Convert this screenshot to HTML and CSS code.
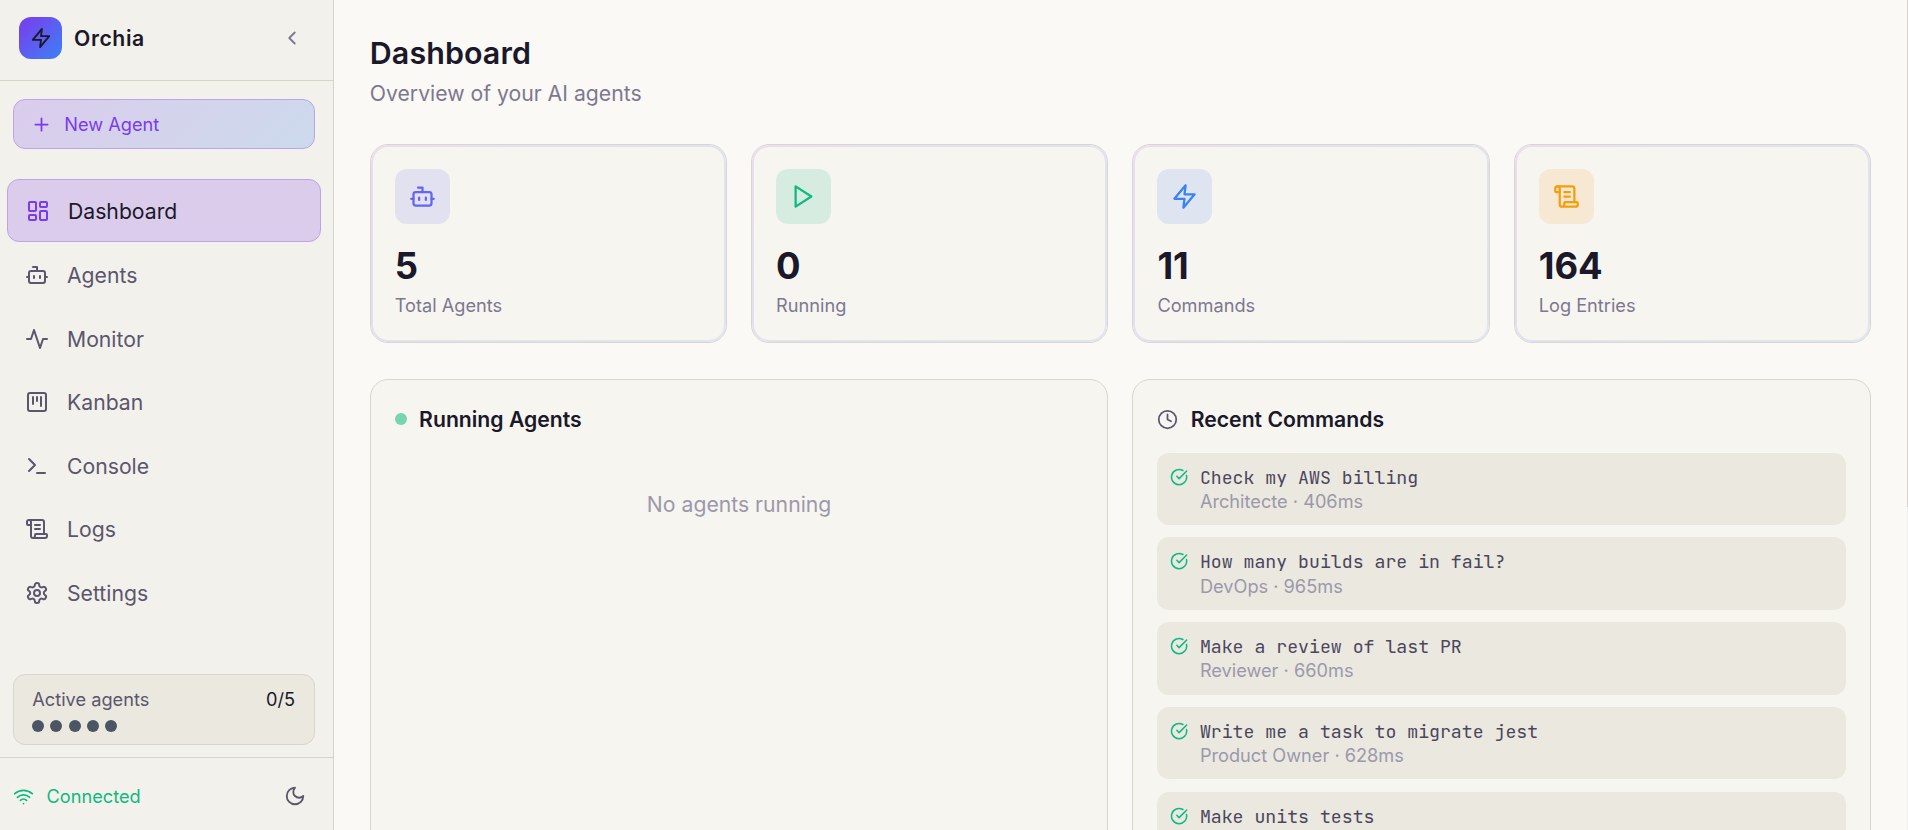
FILE: index.html
```html
<!DOCTYPE html>
<html lang="en">
<head>
<meta charset="utf-8">
<title>Orchia</title>
<link rel="stylesheet" href="styles.css">
</head>
<body>
<svg class="sprite" aria-hidden="true">
  <symbol id="zap" viewBox="0 0 24 24"><polygon points="13 2 3 14 12 14 11 22 21 10 12 10 13 2"/></symbol>
  <symbol id="chevron" viewBox="0 0 24 24"><path d="m15 18-6-6 6-6"/></symbol>
  <symbol id="plus" viewBox="0 0 24 24"><path d="M5 12h14M12 5v14"/></symbol>
  <symbol id="grid" viewBox="0 0 24 24"><rect x="3" y="3" width="7" height="9" rx="1"/><rect x="14" y="3" width="7" height="5" rx="1"/><rect x="14" y="12" width="7" height="9" rx="1"/><rect x="3" y="16" width="7" height="5" rx="1"/></symbol>
  <symbol id="bot" viewBox="0 0 24 24"><path d="M12 8V4H8"/><rect x="4" y="8" width="16" height="12" rx="2"/><path d="M2 14h2M20 14h2M15 13v2M9 13v2"/></symbol>
  <symbol id="activity" viewBox="0 0 24 24"><polyline points="22 12 18 12 15 21 9 3 6 12 2 12"/></symbol>
  <symbol id="kanban" viewBox="0 0 24 24"><rect x="3" y="3" width="18" height="18" rx="2"/><path d="M8 7v7M12 7v4M16 7v9"/></symbol>
  <symbol id="terminal" viewBox="0 0 24 24"><path d="m4 17 6-6-6-6M12 19h8"/></symbol>
  <symbol id="scroll" viewBox="0 0 24 24"><path d="M15 12h-5M15 8h-5M19 17V5a2 2 0 0 0-2-2H4"/><path d="M8 21h12a2 2 0 0 0 2-2v-1a1 1 0 0 0-1-1H11a1 1 0 0 0-1 1v1a2 2 0 1 1-4 0V5a2 2 0 1 0-4 0v2a1 1 0 0 0 1 1h3"/></symbol>
  <symbol id="gear" viewBox="0 0 24 24"><path d="M12.22 2h-.44a2 2 0 0 0-2 2v.18a2 2 0 0 1-1 1.73l-.43.25a2 2 0 0 1-2 0l-.15-.08a2 2 0 0 0-2.73.73l-.22.38a2 2 0 0 0 .73 2.73l.15.1a2 2 0 0 1 1 1.72v.51a2 2 0 0 1-1 1.74l-.15.09a2 2 0 0 0-.73 2.73l.22.38a2 2 0 0 0 2.73.73l.15-.08a2 2 0 0 1 2 0l.43.25a2 2 0 0 1 1 1.73V20a2 2 0 0 0 2 2h.44a2 2 0 0 0 2-2v-.18a2 2 0 0 1 1-1.73l.43-.25a2 2 0 0 1 2 0l.15.08a2 2 0 0 0 2.73-.73l.22-.39a2 2 0 0 0-.73-2.73l-.15-.08a2 2 0 0 1-1-1.74v-.5a2 2 0 0 1 1-1.74l.15-.09a2 2 0 0 0 .73-2.73l-.22-.38a2 2 0 0 0-2.73-.73l-.15.08a2 2 0 0 1-2 0l-.43-.25a2 2 0 0 1-1-1.73V4a2 2 0 0 0-2-2z"/><circle cx="12" cy="12" r="3"/></symbol>
  <symbol id="wifi" viewBox="0 0 24 24"><path d="M12 20h.01M2 8.82a15 15 0 0 1 20 0M5 12.859a10 10 0 0 1 14 0M8.5 16.429a5 5 0 0 1 7 0"/></symbol>
  <symbol id="moon" viewBox="0 0 24 24"><path d="M12 3a6 6 0 0 0 9 9 9 9 0 1 1-9-9Z"/></symbol>
  <symbol id="play" viewBox="0 0 24 24"><polygon points="5 3 19 12 5 21 5 3"/></symbol>
  <symbol id="clock" viewBox="0 0 24 24"><circle cx="12" cy="12" r="10"/><path d="M12 6v6l4 2"/></symbol>
  <symbol id="check" viewBox="0 0 24 24"><path d="M21.801 10A10 10 0 1 1 17 3.335"/><path d="m9 11 3 3L22 4"/></symbol>
</svg>
<div class="app">
  <aside class="sidebar">
    <header class="brand">
      <span class="brand-logo"><svg class="icon i22"><use href="#zap"/></svg></span>
      <span class="brand-name">Orchia</span>
      <svg class="icon i22 collapse"><use href="#chevron"/></svg>
    </header>
    <button class="new-agent"><svg class="icon i21"><use href="#plus"/></svg>New Agent</button>
    <nav class="nav">
      <a class="nav-item active"><svg class="icon i24"><use href="#grid"/></svg>Dashboard</a>
      <a class="nav-item"><svg class="icon i24"><use href="#bot"/></svg>Agents</a>
      <a class="nav-item"><svg class="icon i24"><use href="#activity"/></svg>Monitor</a>
      <a class="nav-item"><svg class="icon i24"><use href="#kanban"/></svg>Kanban</a>
      <a class="nav-item"><svg class="icon i24"><use href="#terminal"/></svg>Console</a>
      <a class="nav-item"><svg class="icon i24"><use href="#scroll"/></svg>Logs</a>
      <a class="nav-item"><svg class="icon i24"><use href="#gear"/></svg>Settings</a>
    </nav>
    <section class="agents-box">
      <div class="agents-row"><span>Active agents</span><span class="agents-count">0/5</span></div>
      <div class="dots"><i class="dot"></i><i class="dot"></i><i class="dot"></i><i class="dot"></i><i class="dot"></i></div>
    </section>
    <footer class="status">
      <svg class="icon i21"><use href="#wifi"/></svg>
      <span class="status-text">Connected</span>
      <svg class="icon i22 theme"><use href="#moon"/></svg>
    </footer>
  </aside>
  <main class="main">
    <h1 class="title">Dashboard</h1>
    <p class="subtitle">Overview of your AI agents</p>
    <div class="stats">
      <article class="stat"><span class="stat-icon indigo"><svg class="icon i27"><use href="#bot"/></svg></span><strong class="stat-value">5</strong><span class="stat-label">Total Agents</span></article>
      <article class="stat"><span class="stat-icon green"><svg class="icon i27"><use href="#play"/></svg></span><strong class="stat-value">0</strong><span class="stat-label">Running</span></article>
      <article class="stat"><span class="stat-icon blue"><svg class="icon i27"><use href="#zap"/></svg></span><strong class="stat-value">11</strong><span class="stat-label">Commands</span></article>
      <article class="stat"><span class="stat-icon amber"><svg class="icon i27"><use href="#scroll"/></svg></span><strong class="stat-value">164</strong><span class="stat-label">Log Entries</span></article>
    </div>
    <div class="panels">
      <section class="panel">
        <h2 class="panel-title"><i class="live-dot"></i>Running Agents</h2>
        <p class="empty">No agents running</p>
      </section>
      <section class="panel">
        <h2 class="panel-title recent"><svg class="icon i21"><use href="#clock"/></svg>Recent Commands</h2>
        <ul class="commands">
          <li class="command"><svg class="icon i18"><use href="#check"/></svg><div><div class="command-text">Check my AWS billing</div><div class="command-meta">Architecte · 406ms</div></div></li>
          <li class="command"><svg class="icon i18"><use href="#check"/></svg><div><div class="command-text">How many builds are in fail?</div><div class="command-meta">DevOps · 965ms</div></div></li>
          <li class="command"><svg class="icon i18"><use href="#check"/></svg><div><div class="command-text">Make a review of last PR</div><div class="command-meta">Reviewer · 660ms</div></div></li>
          <li class="command"><svg class="icon i18"><use href="#check"/></svg><div><div class="command-text">Write me a task to migrate jest</div><div class="command-meta">Product Owner · 628ms</div></div></li>
          <li class="command"><svg class="icon i18"><use href="#check"/></svg><div><div class="command-text">Make units tests</div></div></li>
        </ul>
      </section>
    </div>
  </main>
  <div class="scrollbar"><div class="thumb"></div></div>
</div>
</body>
</html>
```
FILE: styles.css
```css
* { box-sizing: border-box; }
body {
  margin: 0;
  font-family: Inter, "Liberation Sans", sans-serif;
  background: #faf9f5;
  color: #1a1829;
}
.sprite { display: none; }
.icon {
  flex: none;
  display: block;
  fill: none;
  stroke: currentColor;
  stroke-width: 2;
  stroke-linecap: round;
  stroke-linejoin: round;
}
.i18 { width: 18.2px; height: 18.2px; }
.i21 { width: 21px; height: 21px; }
.i22 { width: 22px; height: 22px; }
.i24 { width: 24px; height: 24px; }
.i27 { width: 27px; height: 27px; }

.app { display: flex; height: 830px; overflow: hidden; }

.sidebar {
  flex: none;
  width: 334px;
  height: 830px;
  display: flex;
  flex-direction: column;
  background: #f2f1eb;
  border-right: 1px solid #d5d3cb;
}
.brand {
  height: 81px;
  flex: none;
  display: flex;
  align-items: center;
  padding: 0 30.5px 4px 19px;
  border-bottom: 1px solid #d9d4c8;
}
.brand-logo {
  width: 43px;
  height: 42px;
  display: grid;
  place-items: center;
  border-radius: 12px;
  background: linear-gradient(135deg, #7c3aed, #3b82f6);
}
.brand-name {
  margin-left: 12px;
  font-size: 21.2px;
  font-weight: 600;
  letter-spacing: 0.6px;
}
.collapse { margin-left: auto; color: #7c7890; }
.new-agent {
  flex: none;
  height: 50px;
  margin: 18px 18px 0 13px;
  padding: 0 17.3px;
  display: flex;
  align-items: center;
  gap: 12px;
  border: 1px solid #bda3ea;
  border-radius: 12px;
  background: linear-gradient(135deg, #dbccec, #ccdaec);
  color: #7c3aed;
  font: 400 18.2px Inter, "Liberation Sans", sans-serif;
}
.nav {
  display: flex;
  flex-direction: column;
  gap: 1px;
  margin: 30px 12px 0 7px;
}
.nav-item {
  height: 62.5px;
  display: flex;
  align-items: center;
  gap: 18px;
  padding: 3px 18px 0;
  color: #5b566e;
  font-size: 21.2px;
  font-weight: 400;
}
.nav-item.active {
  padding: 1px 18px 0;
  border: 1px solid #bda3ea;
  border-radius: 12px;
  background: #dbccec;
  color: #1a1829;
}
.nav-item.active .icon { color: #7c3aed; }
.agents-box {
  height: 71px;
  margin: auto 18px 12px 13px;
  padding: 12px 19px 0 18.3px;
  border: 1px solid #d9d6cb;
  border-radius: 12px;
  background: #eae8df;
  color: #5b566e;
  font-size: 18.2px;
  line-height: 24px;
}
.agents-row { display: flex; justify-content: space-between; }
.agents-count { color: #1a1829; }
.dots { display: flex; gap: 6.2px; margin-top: 9px; }
.dot { width: 12px; height: 12px; border-radius: 50%; background: #4b5563; }
.status {
  flex: none;
  height: 73px;
  display: flex;
  align-items: center;
  padding: 4px 27.5px 0 13px;
  border-top: 1px solid #d5d3cb;
  color: #10b981;
  font-size: 18.2px;
}
.status-text { margin-left: 12.5px; }
.theme { margin-left: auto; color: #5b566e; }

.main {
  flex: 1;
  min-width: 0;
  height: 830px;
  overflow: hidden;
  padding: 33px 36px 0 35.8px;
}
.scrollbar { flex: none; width: 1px; background: #f0efe9; }
.thumb { height: 507px; background: #d5d3cb; }
.title {
  margin: 0;
  font-size: 30.4px;
  font-weight: 600;
  line-height: 40px;
  letter-spacing: 0.1px;
}
.subtitle {
  margin: 5px 0 36px;
  font-size: 21.2px;
  line-height: 30px;
  color: #7c7890;
}
.stats { display: grid; grid-template-columns: repeat(4, 1fr); gap: 24px; }
.stat {
  position: relative;
  height: 199px;
  display: flex;
  flex-direction: column;
  padding: 24px;
  border: 1px solid #d9d6cb;
  border-radius: 18px;
  background: #f6f5f0;
}
/* Tinted ring just inside the card border */
.stat::before {
  content: "";
  position: absolute;
  inset: 0;
  padding: 2px;
  border-radius: 17px;
  background: linear-gradient(135deg, #ecdcf2, #e2e0f2 30%, #dfe5f3);
  mask: linear-gradient(#000 0 0) content-box exclude, linear-gradient(#000 0 0);
}
.stat-icon {
  width: 55px;
  height: 55px;
  display: grid;
  place-items: center;
  border-radius: 12px;
}
.indigo { color: #6366f1; background: #e2e1f0; }
.green { color: #10b981; background: #d7ece0; }
.blue { color: #3b82f6; background: #dee4f0; }
.amber { color: #f59e0b; background: #f6e8d3; }
.stat-value { margin-top: 20px; font-size: 36.4px; font-weight: 700; line-height: 44px; }
.stat-label { margin-top: 5px; font-size: 18.2px; line-height: 24px; color: #7c7890; }

.panels { display: grid; grid-template-columns: 1fr 1fr; gap: 24px; margin-top: 36px; }
.panel {
  height: 520px;
  padding: 24px;
  border: 1px solid #d9d6cb;
  border-radius: 18px;
  background: #f6f5f0;
}
.panel-title {
  display: flex;
  align-items: center;
  gap: 12.3px;
  margin: 0;
  height: 30px;
  font-size: 21.2px;
  font-weight: 600;
}
.panel-title .icon { color: #5b566e; }
.live-dot { width: 12px; height: 12px; border-radius: 50%; background: #77d5b2; }
.empty {
  margin: 55px 0 0;
  text-align: center;
  font-size: 21.2px;
  line-height: 30px;
  color: #9c98ac;
}
.commands { list-style: none; margin: 18.8px 0 0; padding: 0; display: grid; gap: 12.2px; }
.command {
  height: 72.5px;
  display: flex;
  gap: 12px;
  padding: 12px 12px 12px 12.3px;
  border-radius: 12px;
  background: #eae8df;
  line-height: 24.3px;
}
.command .icon { margin-top: 3px; color: #10b981; }
.command-text {
  font-family: "JetBrains Mono", "DejaVu Sans Mono", monospace;
  font-size: 18.2px;
  color: #4b465e;
}
.command-meta { font-size: 18.2px; color: #9c98ac; }
```
